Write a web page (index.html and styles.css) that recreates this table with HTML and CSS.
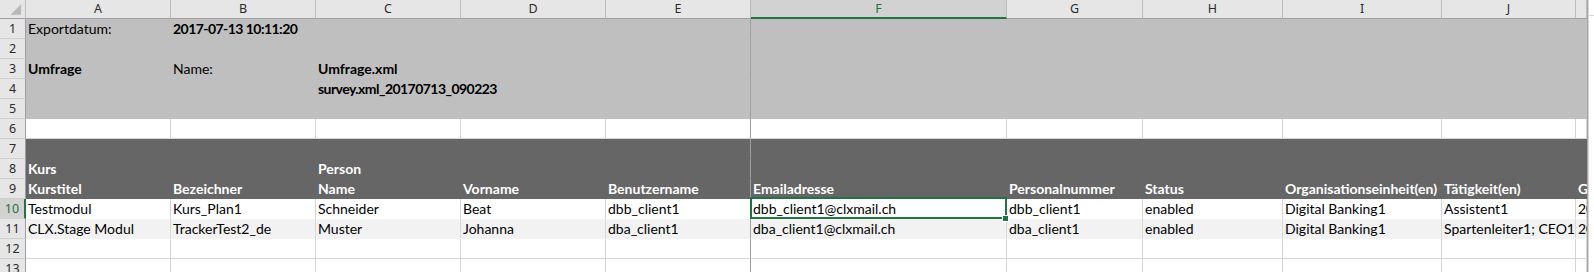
FILE: index.html
```html
<!DOCTYPE html>
<html lang="de">
<head>
<meta charset="utf-8">
<title>Umfrage Export</title>
<link rel="stylesheet" href="styles.css">
</head>
<body>
<div class="app">
  <div class="sheet">
    <div class="row hdr">
      <div class="corner"><svg width="26" height="18" viewBox="0 0 26 18"><polygon points="22,4 22,15 11,15" fill="#b8b8b8"/></svg></div>
      <div class="ch">A</div><div class="ch">B</div><div class="ch">C</div><div class="ch">D</div><div class="ch">E</div>
      <div class="ch sel">F</div><div class="ch">G</div><div class="ch">H</div><div class="ch">I</div><div class="ch">J</div><div class="ch"></div>
    </div>

    <div class="row g">
      <div class="rh">1</div>
      <div class="c">Exportdatum:</div><div class="c b num">2017-07-13 10:11:20</div><div class="c"></div><div class="c"></div><div class="c"></div>
      <div class="c"></div><div class="c"></div><div class="c"></div><div class="c"></div><div class="c"></div><div class="c"></div>
    </div>
    <div class="row g">
      <div class="rh">2</div>
      <div class="c"></div><div class="c"></div><div class="c"></div><div class="c"></div><div class="c"></div>
      <div class="c"></div><div class="c"></div><div class="c"></div><div class="c"></div><div class="c"></div><div class="c"></div>
    </div>
    <div class="row g">
      <div class="rh">3</div>
      <div class="c b">Umfrage</div><div class="c">Name:</div><div class="c b">Umfrage.xml</div><div class="c"></div><div class="c"></div>
      <div class="c"></div><div class="c"></div><div class="c"></div><div class="c"></div><div class="c"></div><div class="c"></div>
    </div>
    <div class="row g">
      <div class="rh">4</div>
      <div class="c"></div><div class="c"></div><div class="c b num">survey.xml_20170713_090223</div><div class="c"></div><div class="c"></div>
      <div class="c"></div><div class="c"></div><div class="c"></div><div class="c"></div><div class="c"></div><div class="c"></div>
    </div>
    <div class="row g">
      <div class="rh">5</div>
      <div class="c"></div><div class="c"></div><div class="c"></div><div class="c"></div><div class="c"></div>
      <div class="c"></div><div class="c"></div><div class="c"></div><div class="c"></div><div class="c"></div><div class="c"></div>
    </div>
    <div class="row w">
      <div class="rh">6</div>
      <div class="c"></div><div class="c"></div><div class="c"></div><div class="c"></div><div class="c"></div>
      <div class="c"></div><div class="c"></div><div class="c"></div><div class="c"></div><div class="c"></div><div class="c"></div>
    </div>
    <div class="row d">
      <div class="rh">7</div>
      <div class="c"></div><div class="c"></div><div class="c"></div><div class="c"></div><div class="c"></div>
      <div class="c"></div><div class="c"></div><div class="c"></div><div class="c"></div><div class="c"></div><div class="c"></div>
    </div>
    <div class="row d">
      <div class="rh">8</div>
      <div class="c">Kurs</div><div class="c"></div><div class="c">Person</div><div class="c"></div><div class="c"></div>
      <div class="c"></div><div class="c"></div><div class="c"></div><div class="c"></div><div class="c"></div><div class="c"></div>
    </div>
    <div class="row d">
      <div class="rh">9</div>
      <div class="c">Kurstitel</div><div class="c">Bezeichner</div><div class="c">Name</div><div class="c">Vorname</div><div class="c">Benutzername</div>
      <div class="c">Emailadresse</div><div class="c">Personalnummer</div><div class="c">Status</div><div class="c">Organisationseinheit(en)</div><div class="c">Tätigkeit(en)</div><div class="c">Geburtsdatum</div>
    </div>
    <div class="row w data">
      <div class="rh cur">10</div>
      <div class="c">Testmodul</div><div class="c">Kurs_Plan1</div><div class="c">Schneider</div><div class="c">Beat</div><div class="c">dbb_client1</div>
      <div class="c active">dbb_client1@clxmail.ch</div><div class="c">dbb_client1</div><div class="c">enabled</div><div class="c">Digital Banking1</div><div class="c">Assistent1</div><div class="c">2017-07-13</div>
    </div>
    <div class="row s data">
      <div class="rh">11</div>
      <div class="c">CLX.Stage Modul</div><div class="c">TrackerTest2_de</div><div class="c">Muster</div><div class="c">Johanna</div><div class="c">dba_client1</div>
      <div class="c">dba_client1@clxmail.ch</div><div class="c">dba_client1</div><div class="c">enabled</div><div class="c">Digital Banking1</div><div class="c">Spartenleiter1; CEO1</div><div class="c">2017-07-13</div>
    </div>
    <div class="row w">
      <div class="rh">12</div>
      <div class="c"></div><div class="c"></div><div class="c"></div><div class="c"></div><div class="c"></div>
      <div class="c"></div><div class="c"></div><div class="c"></div><div class="c"></div><div class="c"></div><div class="c"></div>
    </div>
    <div class="row w">
      <div class="rh">13</div>
      <div class="c"></div><div class="c"></div><div class="c"></div><div class="c"></div><div class="c"></div>
      <div class="c"></div><div class="c"></div><div class="c"></div><div class="c"></div><div class="c"></div><div class="c"></div>
    </div>
  </div>
  <div class="vscroll"><div class="vs-btn"></div></div>
</div>
</body>
</html>
```

FILE: styles.css
```css
html, body {
  margin: 0;
  padding: 0;
  background: #ffffff;
  overflow: hidden;
}

.app {
  display: flex;
  width: 1594px;
  height: 272px;
  overflow: hidden;
}

.sheet {
  width: 1587px;
  flex: none;
  overflow: hidden;
  border-right: 1px solid #a6a6a6;
  font-family: Lato, "Liberation Sans", sans-serif;
  font-size: 14px;
  color: #000;
}

.row {
  display: grid;
  grid-template-columns: 26px 145px 145px 145px 145px 145px 256px 136px 140px 159px 134px 11px;
  height: 20px;
}

.row > div {
  box-sizing: border-box;
  border-right: 1px solid transparent;
  border-bottom: 1px solid transparent;
  white-space: nowrap;
}

/* freeze pane line after column E */
.row > div:nth-child(6) {
  border-right-color: #9f9f9f;
}

/* column header row */
.row.hdr {
  height: 19px;
  background: #e6e6e6;
}
.row.hdr > div {
  border-right-color: #bcbcbc;
  border-bottom-color: #9e9e9e;
}
.corner {
  display: flex;
}
.ch {
  font-family: "Noto Sans", "Open Sans", sans-serif;
  font-size: 12.5px;
  line-height: 18px;
  text-align: center;
  color: #2b2b2b;
}
.ch.sel {
  background: #d2d2d2;
  color: #217346;
  border-bottom: 2px solid #217346 !important;
  line-height: 17px;
}

/* row headers */
.rh {
  background: #e6e6e6;
  font-family: "Noto Sans", "Open Sans", sans-serif;
  font-size: 12.5px;
  line-height: 19px;
  text-align: center;
  color: #2b2b2b;
  border-right-color: #9e9e9e !important;
  border-bottom-color: #cfcfcf !important;
}
.rh.cur {
  background: #d2d2d2;
  color: #217346;
  border-right: 2px solid #217346 !important;
}

/* cells */
.c {
  padding: 0 2px;
  line-height: 19px;
}
.c.b {
  font-weight: 700;
}
.c.num {
  letter-spacing: -0.55px;
}

/* gray top block */
.row.g { background: #bfbfbf; }

/* white rows with gridlines */
.row.w > .c {
  border-right-color: #d4d4d4;
  border-bottom-color: #d4d4d4;
}

/* dark header band */
.row.d { background: #666666; }
.row.d > .c {
  color: #ffffff;
  font-weight: 700;
}

/* striped data row */
.row.s { background: #f2f2f2; }
.row.s > .c { border-right-color: #d9d9d9; }
.row.data > .c { border-bottom-color: transparent; }
.row.w.data > .c { border-right-color: #d4d4d4; }

.row > .c:nth-child(6) { border-right-color: #9f9f9f; }

/* active cell */
.c.active {
  position: relative;
}
.c.active::after {
  content: "";
  position: absolute;
  left: -1px;
  top: -2px;
  right: -1px;
  bottom: -1px;
  border: 2px solid #217346;
}
.c.active::before {
  content: "";
  position: absolute;
  right: -3px;
  bottom: -4px;
  width: 5px;
  height: 5px;
  background: #217346;
  border: 1px solid #ffffff;
  z-index: 2;
}

/* vertical scrollbar stub */
.vscroll {
  flex: none;
  width: 6px;
  height: 272px;
  box-sizing: border-box;
  border-left: 1px solid #d6d6d6;
  background: #ffffff;
}
.vs-btn {
  height: 15px;
  border-bottom: 1px solid #d6d6d6;
}
```
